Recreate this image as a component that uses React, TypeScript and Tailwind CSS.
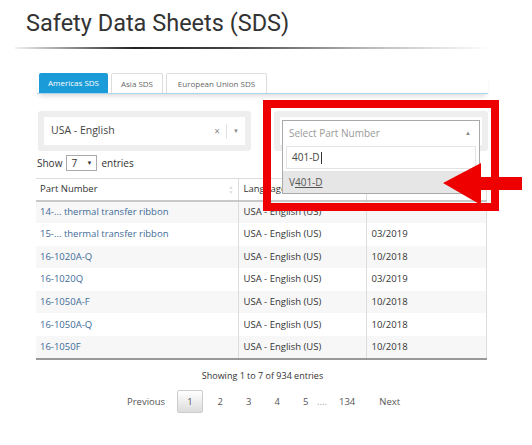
import React from 'react';

const rows = [
  { part: '14-... thermal transfer ribbon', lang: 'USA - English (US)', date: '' },
  { part: '15-... thermal transfer ribbon', lang: 'USA - English (US)', date: '03/2019' },
  { part: '16-1020A-Q', lang: 'USA - English (US)', date: '10/2018' },
  { part: '16-1020Q', lang: 'USA - English (US)', date: '03/2019' },
  { part: '16-1050A-F', lang: 'USA - English (US)', date: '10/2018' },
  { part: '16-1050A-Q', lang: 'USA - English (US)', date: '10/2018' },
  { part: '16-1050F', lang: 'USA - English (US)', date: '10/2018' },
];

const pages = ['2', '3', '4', '5'];

const App = () => {
  return (
    <div className="relative w-[532px] h-[445px] overflow-hidden bg-white font-['Open_Sans',sans-serif] text-[#333]">
      {/* title */}
      <h1 className="pl-[26px] pt-[9px] font-['Roboto',sans-serif] text-[23.5px] leading-[28px] text-[#333]">
        Safety Data Sheets (SDS)
      </h1>
      <div className="ml-[15px] mt-[10px] h-[2px] w-[475px] bg-[linear-gradient(to_right,rgba(0,0,0,0.05),#222_25%,#444_45%,#bbb_75%,rgba(255,255,255,0))]" />

      <div className="ml-[37px] w-[451px]">
        {/* tabs */}
        <div className="mt-[24px] flex gap-[3px] border-b border-[#a9d6ec] pl-[2px] shadow-[0_4px_5px_-2px_rgba(0,0,0,0.15)]">
          <div className="flex h-[20px] w-[69px] items-center justify-center rounded-t-[2px] bg-[#1b9bd8] text-[8px] text-white">
            Americas SDS
          </div>
          <div className="flex h-[20px] w-[52px] items-center justify-center rounded-t-[2px] border border-b-0 border-[#ddd] text-[8px] text-[#666]">
            Asia SDS
          </div>
          <div className="flex h-[20px] w-[101px] items-center justify-center rounded-t-[2px] border border-b-0 border-[#ddd] text-[8px] text-[#666]">
            European Union SDS
          </div>
        </div>

        {/* selects */}
        <div className="mt-[17px] flex justify-between pl-[1px]">
          <div className="w-[213px] rounded-[3px] bg-[#eee] p-[6px]">
            <div className="flex h-[28px] items-center bg-white pl-[7px] pr-[6px] text-[10.5px] text-[#444]">
              <span className="flex-1">USA - English</span>
              <span className="text-[10px] text-[#888]">×</span>
              <span className="mx-[6px] h-[15px] w-px bg-[#e2e2e2]" />
              <span className="text-[6px] text-[#888]">▼</span>
            </div>
          </div>
          <div className="w-[214px] rounded-[3px] bg-[#eee] p-[6px]">
            <div className="h-[28px] bg-white" />
          </div>
        </div>

        {/* show entries */}
        <div className="mt-[4px] flex h-[16px] items-center text-[10px]">
          <span>Show</span>
          <div className="ml-[4px] flex h-[16px] w-[31px] items-center justify-between border border-[#aaa] px-[4px] text-[10px]">
            <span>7</span>
            <span className="text-[6px]">▼</span>
          </div>
          <span className="ml-[4px]">entries</span>
        </div>

        {/* table */}
        <table className="mt-[7px] w-[451px] -ml-px border-collapse text-left text-[9.5px]">
          <thead>
            <tr className="h-[22px] border-t border-b-2 border-[#ddd] border-b-[#c8c8c8]">
              <th className="relative w-[202px] border-r border-[#ddd] pl-[4px] font-normal text-[#333]">
                Part Number
                <span className="absolute right-[4px] top-[6px] flex flex-col text-[5px] leading-[5px] text-[#ddd]">
                  <span>▲</span>
                  <span>▼</span>
                </span>
              </th>
              <th className="w-[128px] border-r border-[#ddd] pl-[5px] font-normal text-[#333]">
                Language
              </th>
              <th className="border-r border-[#ddd] pl-[5px] font-normal text-[#333]">
                Revision
              </th>
            </tr>
          </thead>
          <tbody className="border-b-2 border-[#999]">
            {rows.map((row, i) => (
              <tr
                key={row.part}
                className={i % 2 === 0 ? 'h-[22.6px] bg-[#f7f7f7]' : 'h-[22.6px] bg-white'}
              >
                <td className="border-r border-[#ddd] pl-[4px] text-[#3e6b98]">{row.part}</td>
                <td className="border-r border-[#ddd] pl-[5px]">{row.lang}</td>
                <td className="border-r border-[#ddd] pl-[5px]">{row.date}</td>
              </tr>
            ))}
          </tbody>
        </table>

        {/* info + pagination */}
        <div className="mt-[9px] text-center text-[9px] text-[#333]">Showing 1 to 7 of 934 entries</div>
        <div className="mt-[8px] flex items-center pl-[90px] text-[9.5px] text-[#555]">
          <span className="w-[40px]">Previous</span>
          <span className="ml-[10px] flex h-[23px] w-[26px] items-center justify-center rounded-[2px] border border-[#ccc] bg-[linear-gradient(#fff,#dcdcdc)]">
            1
          </span>
          <div className="ml-[3px] flex">
            {pages.map(p => (
              <span key={p} className="w-[28.5px] text-center">
                {p}
              </span>
            ))}
          </div>
          <span className="-ml-[3px] text-[#999]">....</span>
          <span className="ml-[12px]">134</span>
          <span className="ml-[24px]">Next</span>
        </div>
      </div>

      {/* open part number dropdown */}
      <div className="absolute left-[282px] top-[120px] w-[198px] border border-[#aaa] bg-white">
        <div className="flex h-[25px] items-center justify-between pl-[6px] pr-[8px] text-[10px] text-[#999]">
          <span>Select Part Number</span>
          <span className="text-[6px] text-[#888]">▲</span>
        </div>
        <div className="mx-[3px] flex h-[23px] items-center border border-[#e4e4e4] pl-[5px] text-[10px] text-[#444]">
          401-D<span className="ml-px h-[12px] w-px bg-[#333]" />
        </div>
        <div className="mt-[2px] flex h-[22px] items-center bg-[#e6e6e6] pl-[6px] text-[10px] text-[#555]">
          V<span className="underline">401-D</span>
        </div>
      </div>

      {/* red callout */}
      <div className="pointer-events-none absolute left-[263px] top-[100px] h-[111px] w-[236px] border-[8px] border-[#ee0000]" />
      <svg className="absolute left-[440px] top-[160px]" width="92" height="50" viewBox="0 0 92 50">
        <polygon points="3,23 41,3 41,17 82,17 82,30 41,30 41,45" fill="#ee0000" />
      </svg>
    </div>
  );
};

export default App;
